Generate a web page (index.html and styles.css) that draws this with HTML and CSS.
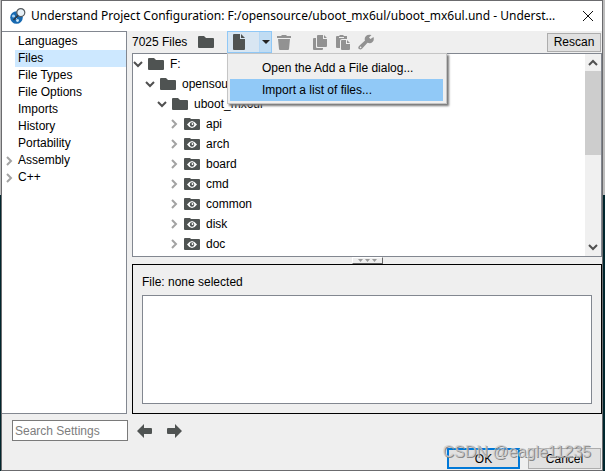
FILE: index.html
```html
<!DOCTYPE html>
<html lang="en">
<head>
<meta charset="utf-8">
<title>Understand Project Configuration</title>
<link rel="stylesheet" href="styles.css">
</head>
<body>
<svg class="defs" aria-hidden="true">
  <symbol id="folder" viewBox="0 0 16 12"><path fill="currentColor" d="M1 0h5l2 2h7q1 0 1 1v8q0 1-1 1H1q-1 0-1-1V1q0-1 1-1z"/></symbol>
  <symbol id="eye-folder" viewBox="0 0 16 12"><path fill="currentColor" d="M1 0h5l1 1h8q1 0 1 1v9q0 1-1 1H1q-1 0-1-1V1q0-1 1-1z"/><path fill="#fff" d="M3 6.500q5-7 10 0q-5 7-10 0z"/><circle cx="8" cy="6.500" r="2.200" fill="currentColor"/><circle cx="8.500" cy="6" r=".9" fill="#fff"/></symbol>
  <symbol id="down" viewBox="0 0 10 10"><path d="M1 3l4 4 4-4" fill="none" stroke="currentColor" stroke-width="2"/></symbol>
  <symbol id="right" viewBox="0 0 10 10"><path d="M3 1l4 4-4 4" fill="none" stroke="currentColor" stroke-width="2"/></symbol>
  <symbol id="arrow" viewBox="0 0 16 14"><path fill="currentColor" d="M0 7L7 0v4h7q1 0 1 1v4q0 1-1 1H7v4z"/></symbol>
</svg>
<main class="window">
  <header class="titlebar">
    <svg class="logo" viewBox="0 0 16 16"><circle cx="6.500" cy="9.500" r="6.300" fill="#1769b1"/><circle cx="3.500" cy="8" r="1.500" fill="#a9d2f2"/><circle cx="7.500" cy="12.500" r="1.400" fill="#d5eafa"/><path d="M4 8l4 4" stroke="#a9d2f2"/><circle cx="10.800" cy="4.600" r="4" fill="#e8f1f7" stroke="#555b60" stroke-width="1.200"/><path d="M8 7.500L3.500 12" stroke="#303a42" stroke-width="1.600"/></svg>
    <h1>Understand Project Configuration: F:/opensource/uboot_mx6ul/uboot_mx6ul.und - Underst...</h1>
    <button class="close" aria-label="Close"><svg viewBox="0 0 10 10"><path d="M0 0l10 10M10 0L0 10" stroke="#111" fill="none"/></svg></button>
  </header>
  <div class="content">
    <nav class="categories">
      <ul>
        <li><a href="#">Languages</a></li>
        <li><a href="#" class="current">Files</a></li>
        <li><a href="#">File Types</a></li>
        <li><a href="#">File Options</a></li>
        <li><a href="#">Imports</a></li>
        <li><a href="#">History</a></li>
        <li><a href="#">Portability</a></li>
        <li><svg class="chev closed"><use href="#right"/></svg><a href="#">Assembly</a></li>
        <li><svg class="chev closed"><use href="#right"/></svg><a href="#">C++</a></li>
      </ul>
    </nav>
    <section class="files">
      <div class="toolbar">
        <span class="count">7025 Files</span>
        <button class="tool" aria-label="Add directory"><svg class="folder"><use href="#folder"/></svg></button>
        <div class="split">
          <button class="new-file" aria-label="Add file"><svg viewBox="0 0 12 16"><path fill="#4f5352" d="M1 0h6v5h5v10q0 1-1 1H1q-1 0-1-1V1q0-1 1-1zM8 0l4 4H8z"/></svg></button>
          <button class="drop" aria-label="File options"><svg viewBox="0 0 8 4"><path d="M0 0h8L4 4z" fill="#222"/></svg></button>
          <div class="menu" role="menu">
            <button role="menuitem">Open the Add a File dialog...</button>
            <button role="menuitem" class="active">Import a list of files...</button>
          </div>
        </div>
        <button class="tool muted trash" aria-label="Remove"><svg viewBox="0 0 14 15"><path fill="currentColor" d="M0 1h4l1-1h4l1 1h4v2H0zM1 4h12l-1 10q0 1-1 1H3q-1 0-1-1z"/></svg></button>
        <button class="tool muted copy" aria-label="Copy"><svg viewBox="0 0 14 15"><path fill="currentColor" d="M5 0h5v4h4v7q0 1-1 1H5q-1 0-1-1V1q0-1 1-1zM11 0l3 3h-3zM0 4q0-1 1-1h2v9q0 1 1 1h6v1q0 1-1 1H1q-1 0-1-1z"/></svg></button>
        <button class="tool muted paste" aria-label="Paste"><svg viewBox="0 0 14 15"><path fill="currentColor" d="M1 1h2l1-1h3l1 1h3v3H6q-2 0-2 2v7H1q-1 0-1-1V2q0-1 1-1zM6 5h4v4h4v5q0 1-1 1H6q-1 0-1-1V6q0-1 1-1zM11 5l3 3h-3z"/><path d="M3 2.500h5" stroke="#efefef"/></svg></button>
        <button class="tool muted wrench" aria-label="Configure"><svg viewBox="0 0 16 16"><path fill="currentColor" d="M13.500 1L11 3.500l1.500 1.500L15.500 3q1 3-1 5t-5 .8L4 14.800Q2.500 16 1 15t0-3L7 6.500Q6 4 8 2t5.500-1z"/><circle cx="2.600" cy="13.400" r=".8" fill="#efefef"/></svg></button>
        <button class="rescan">Rescan</button>
      </div>
      <div class="tree">
        <ul>
          <li><svg class="chev"><use href="#down"/></svg><svg class="folder"><use href="#folder"/></svg>F:</li>
          <li class="level2"><svg class="chev"><use href="#down"/></svg><svg class="folder"><use href="#folder"/></svg>opensource</li>
          <li class="level3"><svg class="chev"><use href="#down"/></svg><svg class="folder"><use href="#folder"/></svg>uboot_mx6ul</li>
          <li class="level4"><svg class="chev closed"><use href="#right"/></svg><svg class="folder"><use href="#eye-folder"/></svg>api</li>
          <li class="level4"><svg class="chev closed"><use href="#right"/></svg><svg class="folder"><use href="#eye-folder"/></svg>arch</li>
          <li class="level4"><svg class="chev closed"><use href="#right"/></svg><svg class="folder"><use href="#eye-folder"/></svg>board</li>
          <li class="level4"><svg class="chev closed"><use href="#right"/></svg><svg class="folder"><use href="#eye-folder"/></svg>cmd</li>
          <li class="level4"><svg class="chev closed"><use href="#right"/></svg><svg class="folder"><use href="#eye-folder"/></svg>common</li>
          <li class="level4"><svg class="chev closed"><use href="#right"/></svg><svg class="folder"><use href="#eye-folder"/></svg>disk</li>
          <li class="level4"><svg class="chev closed"><use href="#right"/></svg><svg class="folder"><use href="#eye-folder"/></svg>doc</li>
        </ul>
        <div class="scrollbar">
          <svg class="chev up"><use href="#down"/></svg>
          <div class="thumb"></div>
          <svg class="chev"><use href="#down"/></svg>
        </div>
      </div>
      <div class="splitter"><div class="handle"><svg viewBox="0 0 20 3"><path fill="#999" d="M0 0h5L2.500 3zM7 0h5L9.500 3zM14 0h5L16.500 3z"/></svg></div></div>
      <div class="details">
        <label for="details">File: none selected</label>
        <textarea id="details" readonly></textarea>
      </div>
    </section>
  </div>
  <footer>
    <div class="search">
      <input type="text" placeholder="Search Settings" aria-label="Search Settings">
      <button class="tool" aria-label="Previous"><svg class="arrow"><use href="#arrow"/></svg></button>
      <button class="tool" aria-label="Next"><svg class="arrow next"><use href="#arrow"/></svg></button>
    </div>
    <div class="actions">
      <button class="ok">OK</button>
      <button>Cancel</button>
      <span class="watermark">CSDN @eagle11235</span>
    </div>
  </footer>
</main>
</body>
</html>
```
FILE: styles.css
```css
* { box-sizing: border-box; }
body {
  margin: 0;
  min-height: 100vh;
  display: flex;
  padding: 0 2px 0 1px;
  background: linear-gradient(#bdbdbd 195px, #00262d 195px);
  font: 12px/16px "Liberation Sans", Arial, sans-serif;
  color: #000;
}
ul { list-style: none; margin: 0; padding: 0; }
button, input, textarea { font: inherit; color: inherit; margin: 0; }
button { padding: 0; border: 0; background: none; }
svg { display: block; flex: none; }
a { color: inherit; text-decoration: none; }
.defs { display: none; }
.window {
  flex: 1;
  min-width: 0;
  display: flex;
  flex-direction: column;
  background: #efefef;
  border: 1px solid #6b6b6e;
}
.titlebar {
  height: 30px;
  display: flex;
  align-items: center;
  background: #fff;
  padding: 0 9px 0 8px;
}
.logo { width: 16px; height: 16px; }
h1 {
  flex: 1;
  min-width: 0;
  margin: 0 0 0 5px;
  font: 12px/20px "Noto Sans", sans-serif;
  white-space: nowrap;
  overflow: hidden;
  text-overflow: ellipsis;
}
.close svg { width: 10px; height: 10px; }
.content { flex: 1; display: flex; gap: 5px; min-height: 0; }
.categories {
  flex: none;
  width: 125px;
  padding-top: 1px;
  background: #fff;
  border: 1px solid #828790;
  border-left: 0;
}
.categories li { display: flex; align-items: center; justify-content: flex-end; height: 17px; }
.categories a { width: 111px; padding-left: 3px; line-height: 17px; }
.categories .current { background: #cde8ff; }
.categories .chev { margin: 0 auto 0 2px; }
.chev { width: 10px; height: 10px; color: #505050; }
.chev.closed { color: #a3a3a3; }
.folder { width: 16px; height: 12px; color: #4f5352; }
.files { flex: 1; min-width: 0; display: flex; flex-direction: column; }
.toolbar { height: 22px; display: flex; align-items: center; }
.count { width: 66px; }
.tool { color: #4f5352; }
.muted { color: #929292; }
.muted svg { width: 14px; height: 15px; }
.split {
  position: relative;
  display: flex;
  align-self: stretch;
  width: 45px;
  margin-left: 13px;
  border: 1px solid #90c8f6;
  background: #d8e6f2;
}
.new-file { flex: 1; padding-left: 5px; }
.new-file svg { width: 12px; height: 16px; }
.drop { width: 12px; background: #c0dcf3; border-left: 1px solid #b5d8f5; display: flex; align-items: center; justify-content: center; }
.drop svg { width: 8px; height: 4px; }
.menu {
  position: absolute;
  z-index: 1;
  top: 21px;
  left: -1px;
  width: 220px;
  padding: 3px 3px 2px 2px;
  border: 1px solid #c5c5c5;
  background: #efefef;
  box-shadow: 2px 2px 2px #777;
}
.menu button { display: block; width: 100%; height: 22px; padding-left: 32px; text-align: left; }
.menu .active { background: #91c9f7; }
.trash { margin-left: 5px; }
.copy { margin-left: 22px; }
.paste { margin-left: 9px; }
.wrench { margin-left: 8px; }
.wrench svg { width: 16px; height: 16px; }
.rescan { margin-left: auto; margin-right: 1px; width: 54px; height: 19px; border: 1px solid #adadad; background: #e1e1e1; }
.tree { display: flex; background: #fff; border: 1px solid #828790; }
.tree ul { flex: 1; min-width: 0; padding-bottom: 2px; }
.tree li { display: flex; align-items: center; height: 20px; line-height: 18px; }
.tree li .folder { margin: 0 6px 0 5px; }
.tree .level2 { padding-left: 12px; }
.tree .level3 { padding-left: 24px; }
.tree .level4 { padding-left: 36px; }
.scrollbar {
  width: 16px;
  display: flex;
  flex-direction: column;
  align-items: center;
  background: #f0f0f0;
  padding: 4px 0;
}
.scrollbar .up { transform: rotate(180deg); }
.thumb { width: 100%; height: 84px; margin: 3px 0 auto; background: #cdcdcd; }
.splitter { height: 7px; display: flex; justify-content: center; }
.handle {
  width: 31px;
  border: 1px solid;
  border-color: #fff #666 #666 #fff;
  padding: 1px 5px;
}
.handle svg { width: 20px; height: 3px; }
.details {
  flex: 1;
  display: flex;
  flex-direction: column;
  padding: 9px;
  gap: 5px;
  border: 1px solid #000;
}
.details textarea { flex: 1; width: 100%; min-height: 0; border: 1px solid #828790; background: #fff; resize: none; }
footer { height: 56px; display: flex; justify-content: space-between; padding: 6px 1px 1px 10px; }
.search { display: flex; align-items: center; height: 21px; gap: 13px; }
.search input { width: 116px; height: 21px; padding: 0 2px; border: 1px solid #7a7a7a; background: #fff; }
.search input::placeholder { color: #7d7d7d; opacity: 1; }
.search .tool:nth-of-type(1) { margin-left: -4px; }
.arrow { width: 16px; height: 14px; }
.next { transform: scaleX(-1); }
.actions { position: relative; align-self: flex-end; display: flex; gap: 8px; }
.actions button { width: 73px; height: 21px; border: 1px solid #adadad; background: #e1e1e1; }
.actions .ok { border: 2px solid #0078d7; }
.watermark {
  position: absolute;
  right: 10px;
  bottom: 8px;
  font-size: 16px;
  line-height: 18px;
  white-space: nowrap;
  color: rgb(205 205 205 / 75%);
  text-shadow: 1px 1px 0 #888;
}
```
